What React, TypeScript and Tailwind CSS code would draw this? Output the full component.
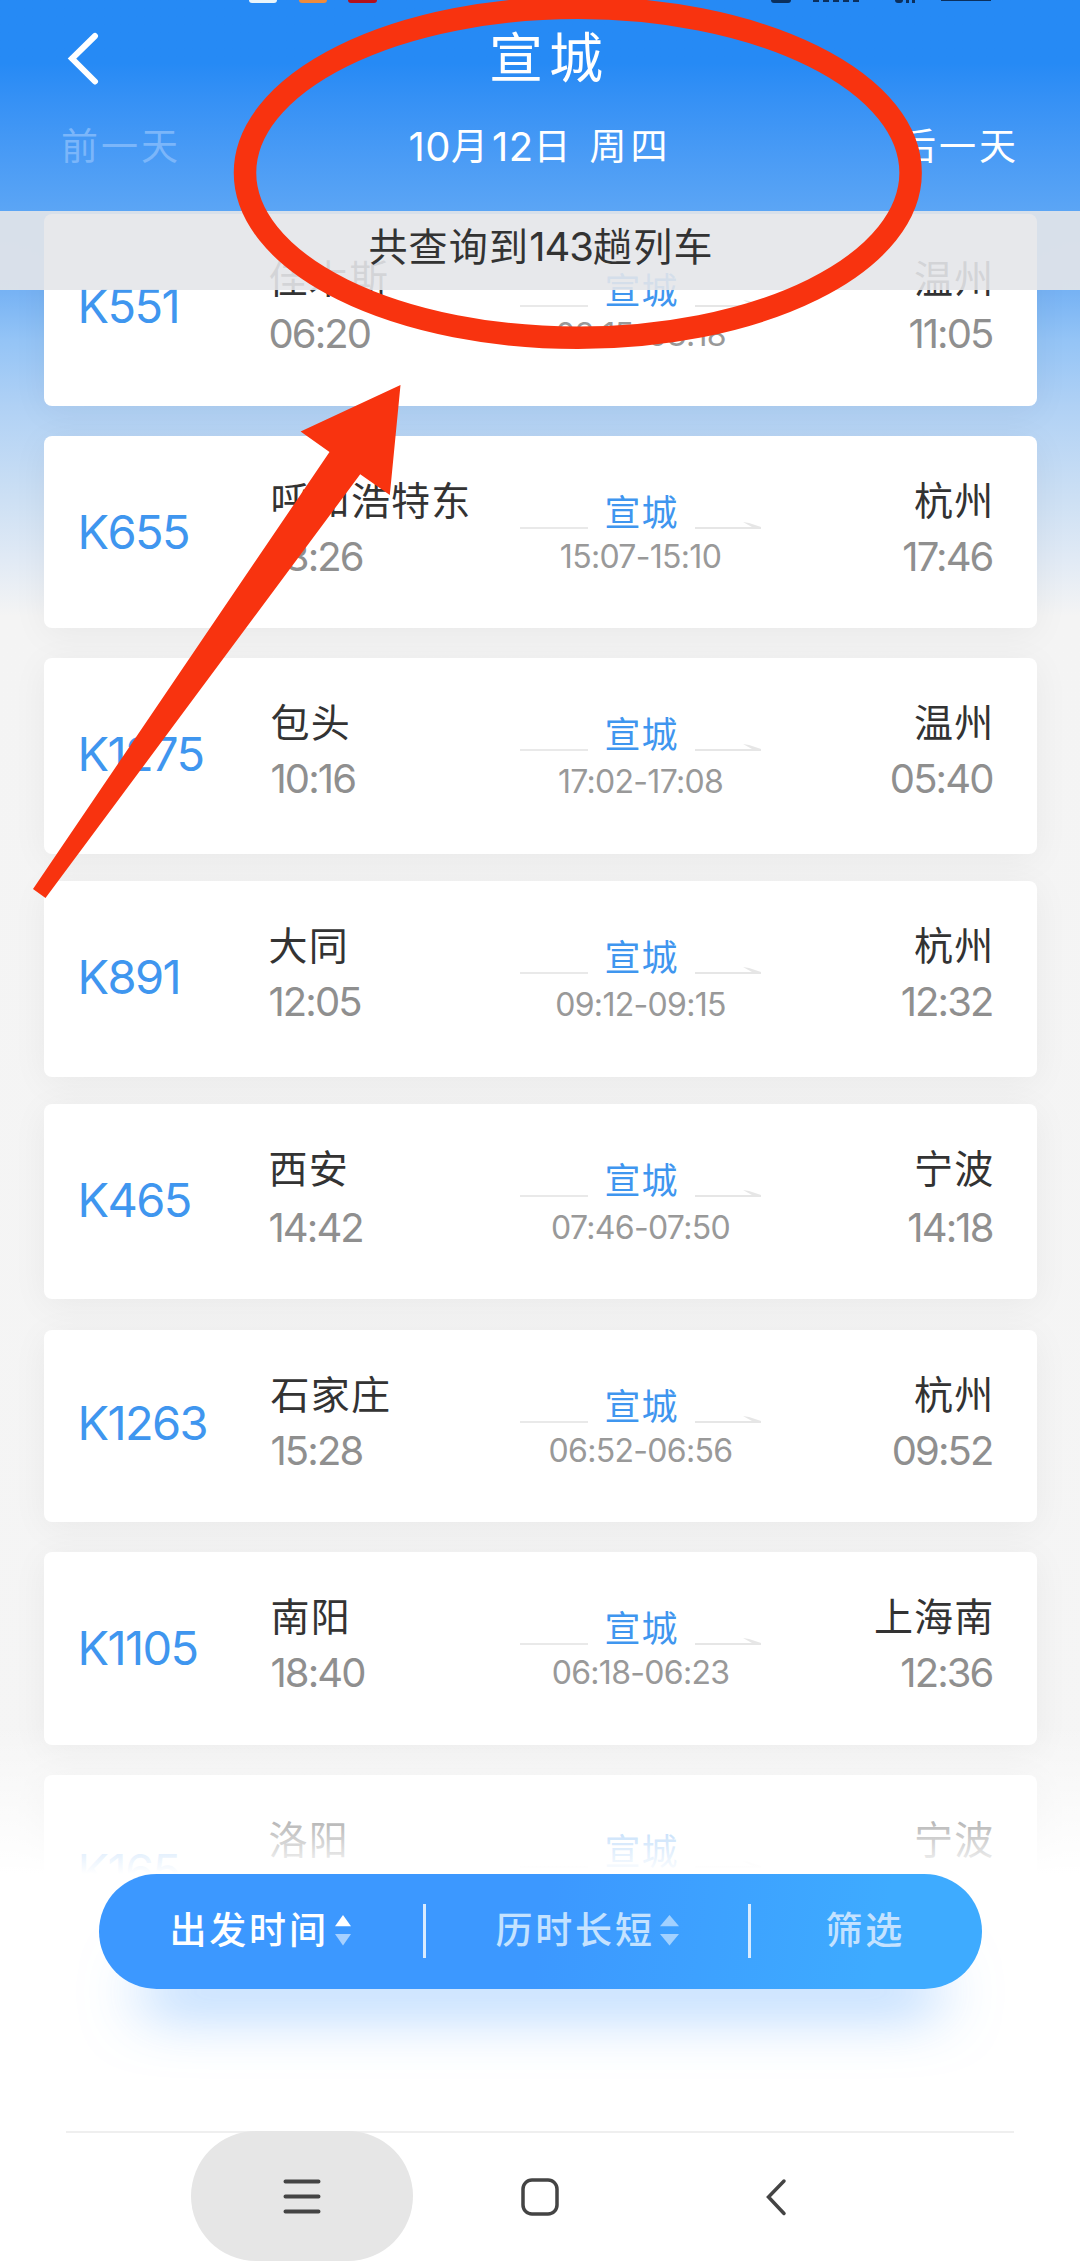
type Train = {
  no: string;
  from: string;
  to: string;
  depart?: string;
  arrive?: string;
  stop?: string;
  className: string;
  noClass?: string;
  fromClass?: string;
  timeClass?: string;
  stopClass?: string;
};

const trains: Train[] = [
  { no: 'K551', from: '佳木斯', depart: '06:20', to: '温州', arrive: '11:05', stop: '03:15-03:18', className: 'h-[192px] mb-[30px]', noClass: 'pt-[23px]', fromClass: '-ml-px', timeClass: 'pt-px' },
  { no: 'K655', from: '呼和浩特东', depart: '18:26', to: '杭州', arrive: '17:46', stop: '15:07-15:10', className: 'h-[192px] mb-[30px]', fromClass: 'pl-px' },
  { no: 'K1275', from: '包头', depart: '10:16', to: '温州', arrive: '05:40', stop: '17:02-17:08', className: 'h-[196px] mb-[27px]', fromClass: 'pl-px', stopClass: 'pt-[3px]' },
  { no: 'K891', from: '大同', depart: '12:05', to: '杭州', arrive: '12:32', stop: '09:12-09:15', className: 'h-[196px] mb-[27px]', fromClass: '-ml-px', stopClass: 'pt-[3px]' },
  { no: 'K465', from: '西安', depart: '14:42', to: '宁波', arrive: '14:18', stop: '07:46-07:50', className: 'h-[195px] mb-[31px]', fromClass: '-ml-px', timeClass: 'pt-[5px]', stopClass: 'pt-[3px]' },
  { no: 'K1263', from: '石家庄', depart: '15:28', to: '杭州', arrive: '09:52', stop: '06:52-06:56', className: 'h-[192px] mb-[30px]', noClass: 'pt-[24px]', fromClass: 'pl-px' },
  { no: 'K1105', from: '南阳', depart: '18:40', to: '上海南', arrive: '12:36', stop: '06:18-06:23', className: 'h-[193px] mb-[30px]', fromClass: 'pl-px' },
  { no: 'K165', from: '洛阳', to: '宁波', className: 'h-[193px]', fromClass: '-ml-px' },
];

function TrainCard({ train }: { train: Train }) {
  return (
    <article
      className={`flex w-[993px] shrink-0 rounded-lg bg-white pl-[34px] pr-[42px] pt-[41px] shadow-[0_6px_36px_rgba(0,0,0,0.05)] ${train.className}`}
    >
      <div className={`w-[192px] text-[47px] leading-[56px] tracking-[-1.6px] text-[#3f96ef] ${train.noClass ?? 'pt-[27px]'}`}>
        {train.no}
      </div>
      <div className="w-[250px]">
        <div className={train.fromClass}>
          <div className="whitespace-nowrap text-[39px] leading-[48px] tracking-[1.2px] text-[#333]">{train.from}</div>
          <div className={`text-[40px] leading-[60px] tracking-[-1.9px] text-[#8f8f8f] ${train.timeClass ?? 'pt-[2px]'}`}>{train.depart}</div>
        </div>
      </div>
      <div className="flex w-[242px] flex-col items-center pt-[13px]">
        <div className="flex h-[46px] w-full items-start justify-between">
          <span className="mt-[37px] h-[2px] w-[68px] bg-[#e9e9e9]" />
          <span className="text-[36px] leading-[46px] tracking-[1px] text-[#3f96ef]">宣城</span>
          <svg className="mt-[32px] h-[7px] w-[66px]" viewBox="0 0 66 7" fill="#e6e6e6">
            <path d="M0 5h57L48 0l6 1 12 4v2H0z" />
          </svg>
        </div>
        <div className={`text-[32px] leading-[42px] tracking-[-0.7px] text-[#999] ${train.stopClass ?? ''}`}>{train.stop}</div>
      </div>
      <div className="flex-1 text-right">
        <div className="whitespace-nowrap text-[39px] leading-[48px] tracking-[1.2px] text-[#333]">{train.to}</div>
        <div className={`pr-[2px] text-[40px] leading-[60px] tracking-[-1.9px] text-[#8f8f8f] ${train.timeClass ?? 'pt-[2px]'}`}>{train.arrive}</div>
      </div>
    </article>
  );
}

function SortArrows({ up, down, className }: { up: string; down: string; className: string }) {
  return (
    <svg className={className} viewBox="0 0 20 32" preserveAspectRatio="none">
      <path d="M10 0l10 11.5H0z" fill={up} />
      <path d="M0 19.5h20L10 31.5z" fill={down} />
    </svg>
  );
}

export default function App() {
  return (
    <div className="relative h-[2261px] w-[1080px] overflow-hidden bg-white font-['Inter','Noto_Sans_CJK_SC',sans-serif]">
      <div className="flex h-full flex-col">
        <header className="h-[211px] shrink-0 bg-linear-to-b from-[#268af5] from-30% to-[#5ba5f5] text-white">
          {/* bottom edge of the system status bar */}
          <div className="flex h-[3px] items-start">
            <span className="ml-[249px] h-[3px] w-[28px] rounded-b-md bg-[#e9f5fb]" />
            <span className="ml-[22px] h-[3px] w-[28px] rounded-b-md bg-[#ee8b3c]" />
            <span className="ml-[21px] h-[3px] w-[29px] rounded-b-md bg-[#b3101c]" />
            <span className="ml-[394px] h-[3px] w-[20px] rounded-b-lg bg-[#0b2f5c]" />
            <span className="ml-[22px] h-[2px] w-[6px] bg-[#0b2f5c]" />
            <span className="ml-[4px] h-[2px] w-[6px] bg-[#0b2f5c]" />
            <span className="ml-[4px] h-[2px] w-[6px] bg-[#0b2f5c]" />
            <span className="ml-[4px] h-[2px] w-[6px] bg-[#0b2f5c]" />
            <span className="ml-[4px] h-[2px] w-[6px] bg-[#0b2f5c]" />
            <span className="ml-[36px] h-[3px] w-[8px] rounded-b-sm bg-[#0b2f5c]" />
            <span className="ml-[3px] h-[3px] w-[3px] bg-[#0b2f5c]" />
            <span className="ml-[3px] h-[3px] w-[3px] bg-[#0b2f5c]" />
            <span className="ml-[26px] h-px w-[50px] bg-[#0b2f5c]" />
          </div>
          <div className="flex h-[111px] items-center justify-between px-[60px]">
            <svg className="h-[54px] w-[42px]" viewBox="0 0 42 54" fill="none" stroke="#fff" strokeWidth="6" strokeLinecap="round">
              <path d="M35 4L12 26.5l23 23" />
            </svg>
            <h1 className="pl-[18px] text-[54px] leading-[60px] tracking-[6px]">宣城</h1>
            <span className="w-[42px]" />
          </div>
          <div className="flex h-[66px] items-center justify-between px-[61px] text-[37px] leading-[66px]">
            <span className="tracking-[3px] text-[#7bb6fa]">前一天</span>
            <span className="flex items-center tracking-[4px]">
              <span className="text-[40px] tracking-[0.5px]">10</span>月<span className="text-[40px] tracking-[0.5px]">12</span>日
              <span className="pl-[15px]">周四</span>
            </span>
            <span className="tracking-[3px]">后一天</span>
          </div>
        </header>

        <main className="relative h-[1663px] shrink-0 overflow-hidden bg-[linear-gradient(#66abf4_0px,#76b2f4_79px,#94c4f6_129px,#b0d1f5_195px,#cde0f4_289px,#e1eaf5_349px,#f4f4f4_405px,#f5f5f5_100%)]">
          <div className="flex flex-col items-center pt-[3px]">
            {trains.map((train) => (
              <TrainCard key={train.no} train={train} />
            ))}
          </div>
          <div className="absolute inset-x-0 top-0 flex h-[79px] items-center justify-center bg-[#e4e5e9]/90 pb-[7px] pl-[2px] text-[39px] tracking-[1.2px] text-[#333]">
            共查询到<span className="text-[40px] tracking-[-1px]">143</span>趟列车
          </div>
          <div className="absolute inset-x-0 bottom-0 h-[150px] bg-linear-to-b from-white/0 to-white" />
        </main>

        <div className="flex h-[257px] shrink-0 justify-center">
          <div className="flex h-[115px] w-[883px] items-center rounded-full bg-[linear-gradient(100deg,#3c98ff_50%,#3eabff_88%)] pb-[2px] text-[37px] font-medium tracking-[2.8px] text-[#c4e2ff] shadow-[0_60px_60px_-42px_rgba(60,150,255,0.6)]">
            <div className="flex w-[324px] items-center pl-[71px] text-white">
              出发时间
              <SortArrows className="ml-[6px] h-[31px] w-[16px]" up="#fff" down="#a6d0ff" />
            </div>
            <span className="h-[54px] w-[3px] bg-[#d8ebff]" />
            <div className="flex w-[322px] items-center pl-[70px]">
              历时长短
              <SortArrows className="ml-[5px] h-[31px] w-[19px]" up="#a2d1ff" down="#a2d1ff" />
            </div>
            <span className="h-[54px] w-[3px] bg-[#d8ebff]" />
            <div className="pl-[75px]">筛选</div>
          </div>
        </div>

        <nav className="mx-[66px] flex h-[130px] shrink-0 border-t-2 border-[#efefef]">
          <div className="-mt-[2px] ml-[125px] flex h-[130px] w-[222px] items-center justify-center rounded-full bg-[#e6e6e6]">
            <svg className="h-[38px] w-[38px]" viewBox="0 0 38 38" stroke="#444" strokeWidth="4" strokeLinecap="round">
              <path d="M2.5 4.5h33M2.5 19.5h33M2.5 34.5h33" />
            </svg>
          </div>
          <svg className="ml-[108px] mt-[45px] h-[38px] w-[38px]" viewBox="0 0 38 38" fill="none" stroke="#444" strokeWidth="3.5">
            <rect x="2" y="2" width="34" height="34" rx="9" />
          </svg>
          <svg className="ml-[207px] mt-[45px] h-[38px] w-[22px]" viewBox="0 0 22 38" fill="none" stroke="#444" strokeWidth="3.5" strokeLinecap="round">
            <path d="M18 3L2.500 19 18 35.500" />
          </svg>
        </nav>
      </div>

      {/* hand-drawn markup over the screen */}
      <svg className="absolute inset-0 h-full w-full" viewBox="0 0 1080 2261" fill="none">
        <ellipse cx="577.8" cy="172.8" rx="332.8" ry="165" stroke="#f8330f" strokeWidth="22.5" />
        <path d="M400.5 385L300.6 431.4L329.5 452L33 889L45.5 898L360.2 474.3L389.8 495z" fill="#f8330f" />
      </svg>
    </div>
  );
}
